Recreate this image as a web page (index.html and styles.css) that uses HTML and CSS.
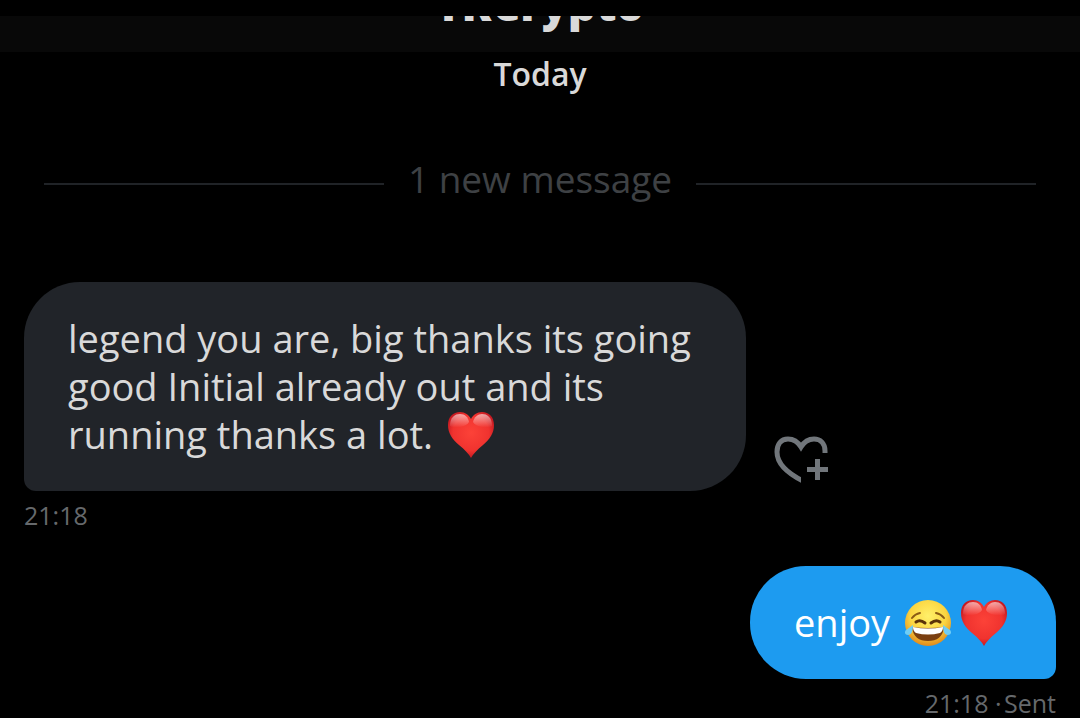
FILE: index.html
```html
<!DOCTYPE html>
<html lang="en">
<head>
    <meta charset="UTF-8">
    <meta name="viewport" content="width=device-width, initial-scale=1.0">
    <title>Messages</title>
    <link rel="stylesheet" href="styles.css">
</head>
<body>
    <!-- shared emoji drawings -->
    <svg class="defs" width="0" height="0" aria-hidden="true">
        <defs>
            <radialGradient id="heartFill" cx="50%" cy="45%" r="60%">
                <stop offset="0" stop-color="#fc4238"/>
                <stop offset="0.65" stop-color="#f0332f"/>
                <stop offset="1" stop-color="#b8121d"/>
            </radialGradient>
            <linearGradient id="heartShine" x1="0" y1="0" x2="0" y2="1">
                <stop offset="0" stop-color="#fff" stop-opacity="0.6"/>
                <stop offset="1" stop-color="#fff" stop-opacity="0"/>
            </linearGradient>
            <radialGradient id="faceFill" cx="50%" cy="35%" r="65%">
                <stop offset="0" stop-color="#fff06a"/>
                <stop offset="0.6" stop-color="#fbd540"/>
                <stop offset="1" stop-color="#e08a1c"/>
            </radialGradient>
            <symbol id="heart" viewBox="0 0 48 48">
                <path fill="url(#heartFill)" d="M24 47C22 43 18 39 12 34C5 28 1 22 1 14C1 6 6 1 13 1C18 1 22 4 24 8C26 4 30 1 35 1C42 1 47 6 47 14C47 22 43 28 36 34C30 39 26 43 24 47Z"/>
                <path fill="url(#heartShine)" d="M3 15C3 6 8 3 13 3C18 3 21 6 22 11C19 16 8 18 3 15Z"/>
                <path fill="url(#heartShine)" d="M26 11C27 6 31 3 35 3C40 3 45 6 45 15C40 18 29 16 26 11Z"/>
            </symbol>
            <symbol id="joy" viewBox="0 0 48 48">
                <circle cx="24" cy="24" r="23" fill="url(#faceFill)"/>
                <path fill="none" stroke="#8a5a14" stroke-width="2" stroke-linecap="round" d="M8 19Q11 15 16 14M40 19Q37 15 32 14"/>
                <path fill="none" stroke="#5b3209" stroke-width="3" stroke-linecap="round" d="M12 23Q16 20 21 24M27 24Q32 20 36 23"/>
                <path fill="#7a3f10" d="M8 28Q24 30 40 28C39 38 33 42 24 42C15 42 9 38 8 28Z"/>
                <path fill="#fff" d="M9 28Q24 31 39 28Q39 32 36 34Q24 37 12 34Q9 32 9 28Z"/>
                <path fill="#6fcdf5" d="M9 26C9 31 8 36 4 36C1 36 0 33 2 31Q5 29 9 26Z"/>
                <path fill="#6fcdf5" d="M39 26C39 31 40 36 44 36C47 36 48 33 46 31Q43 29 39 26Z"/>
            </symbol>
        </defs>
    </svg>

    <header class="topbar">
        <div class="statusbar"></div>
        <h1 class="topbar-name">TKCrypto</h1>
    </header>

    <main class="chat">
        <h2 class="day">Today</h2>
        <div class="divider">1 new message</div>

        <div class="message">
            <div class="message-row">
                <p class="bubble bubble-in">legend you are, big thanks its going good Initial already out and its running thanks a lot. <svg class="emoji" role="img" aria-label="Red heart"><use href="#heart"/></svg></p>
                <button class="react" type="button" aria-label="Add reaction">
                    <svg class="react-icon" viewBox="14 12 54 48">
                        <clipPath id="heartCut"><path d="M10 10H70V29H41V62H10Z"/></clipPath>
                        <path clip-path="url(#heartCut)" fill="none" stroke="currentColor" stroke-width="5" d="M65 32V27C65 19 60 15 54 15C48 15 44 18 41 23C38 18 34 15 28 15C21 15 17 20 17 28C17 39 27 49 43 57"/>
                        <path fill="currentColor" d="M55 35H60V43H68V48H60V56H55V48H47V43H55Z"/>
                    </svg>
                </button>
            </div>
            <div class="meta">21:18</div>
        </div>

        <div class="message message-out">
            <p class="bubble bubble-out">enjoy <svg class="emoji" role="img" aria-label="Face with tears of joy"><use href="#joy"/></svg><svg class="emoji" role="img" aria-label="Red heart"><use href="#heart"/></svg></p>
            <div class="meta">21:18 ·&#8202;Sent</div>
        </div>
    </main>
</body>
</html>
```

FILE: styles.css
```css
* {
    box-sizing: border-box;
}
body {
    margin: 0;
    background-color: #000;
    color: #d9d9d9;
    font-family: "Open Sans", "Noto Sans", sans-serif;
}
.defs {
    position: absolute;
}
.topbar {
    display: flex;
    flex-direction: column;
    align-items: center;
    height: 52px;
    background-color: #080808;
    overflow: hidden;
}
/* covers the top part of the scrolled name */
.statusbar {
    position: relative;
    z-index: 1;
    flex: none;
    width: 100%;
    height: 16px;
    background-color: #000;
}
.topbar-name {
    margin: -34px 0 0;
    font-size: 44px;
    line-height: 44px;
    font-weight: 800;
}
.chat {
    padding: 0 24px;
}
.day {
    margin: 0;
    font-size: 32px;
    line-height: 44px;
    font-weight: 600;
    text-align: center;
}
.divider {
    display: flex;
    align-items: center;
    gap: 24px;
    margin: 58px 20px 78px;
    color: #3e4144;
    font-size: 37px;
    line-height: 50px;
}
.divider::before,
.divider::after {
    content: "";
    flex: 1;
    height: 2px;
    margin-top: 10px;
    background-color: #202327;
}
.message-row {
    display: flex;
    align-items: flex-end;
    gap: 28px;
}
.bubble {
    margin: 0;
    padding: 32px 44px;
    font-size: 38px;
    line-height: 48px;
}
.bubble-in {
    width: 70%;
    background-color: #212429;
    border-radius: 56px 56px 56px 12px;
}
.bubble-out {
    background-color: #1d9bf0;
    color: #fff;
    border-radius: 56px 56px 12px 56px;
}
.emoji {
    width: 48px;
    height: 48px;
    margin: 0 4px;
    vertical-align: -10px;
}
.react {
    padding: 0;
    margin-bottom: 7px;
    border: none;
    background: none;
    color: #71767b;
    cursor: pointer;
}
.react-icon {
    display: block;
    width: 54px;
    height: 48px;
}
.meta {
    padding-top: 10px;
    color: #66696c;
    font-size: 25px;
    line-height: 28px;
}
.message-out {
    display: flex;
    flex-direction: column;
    align-items: flex-end;
    margin-top: 37px;
}
```
